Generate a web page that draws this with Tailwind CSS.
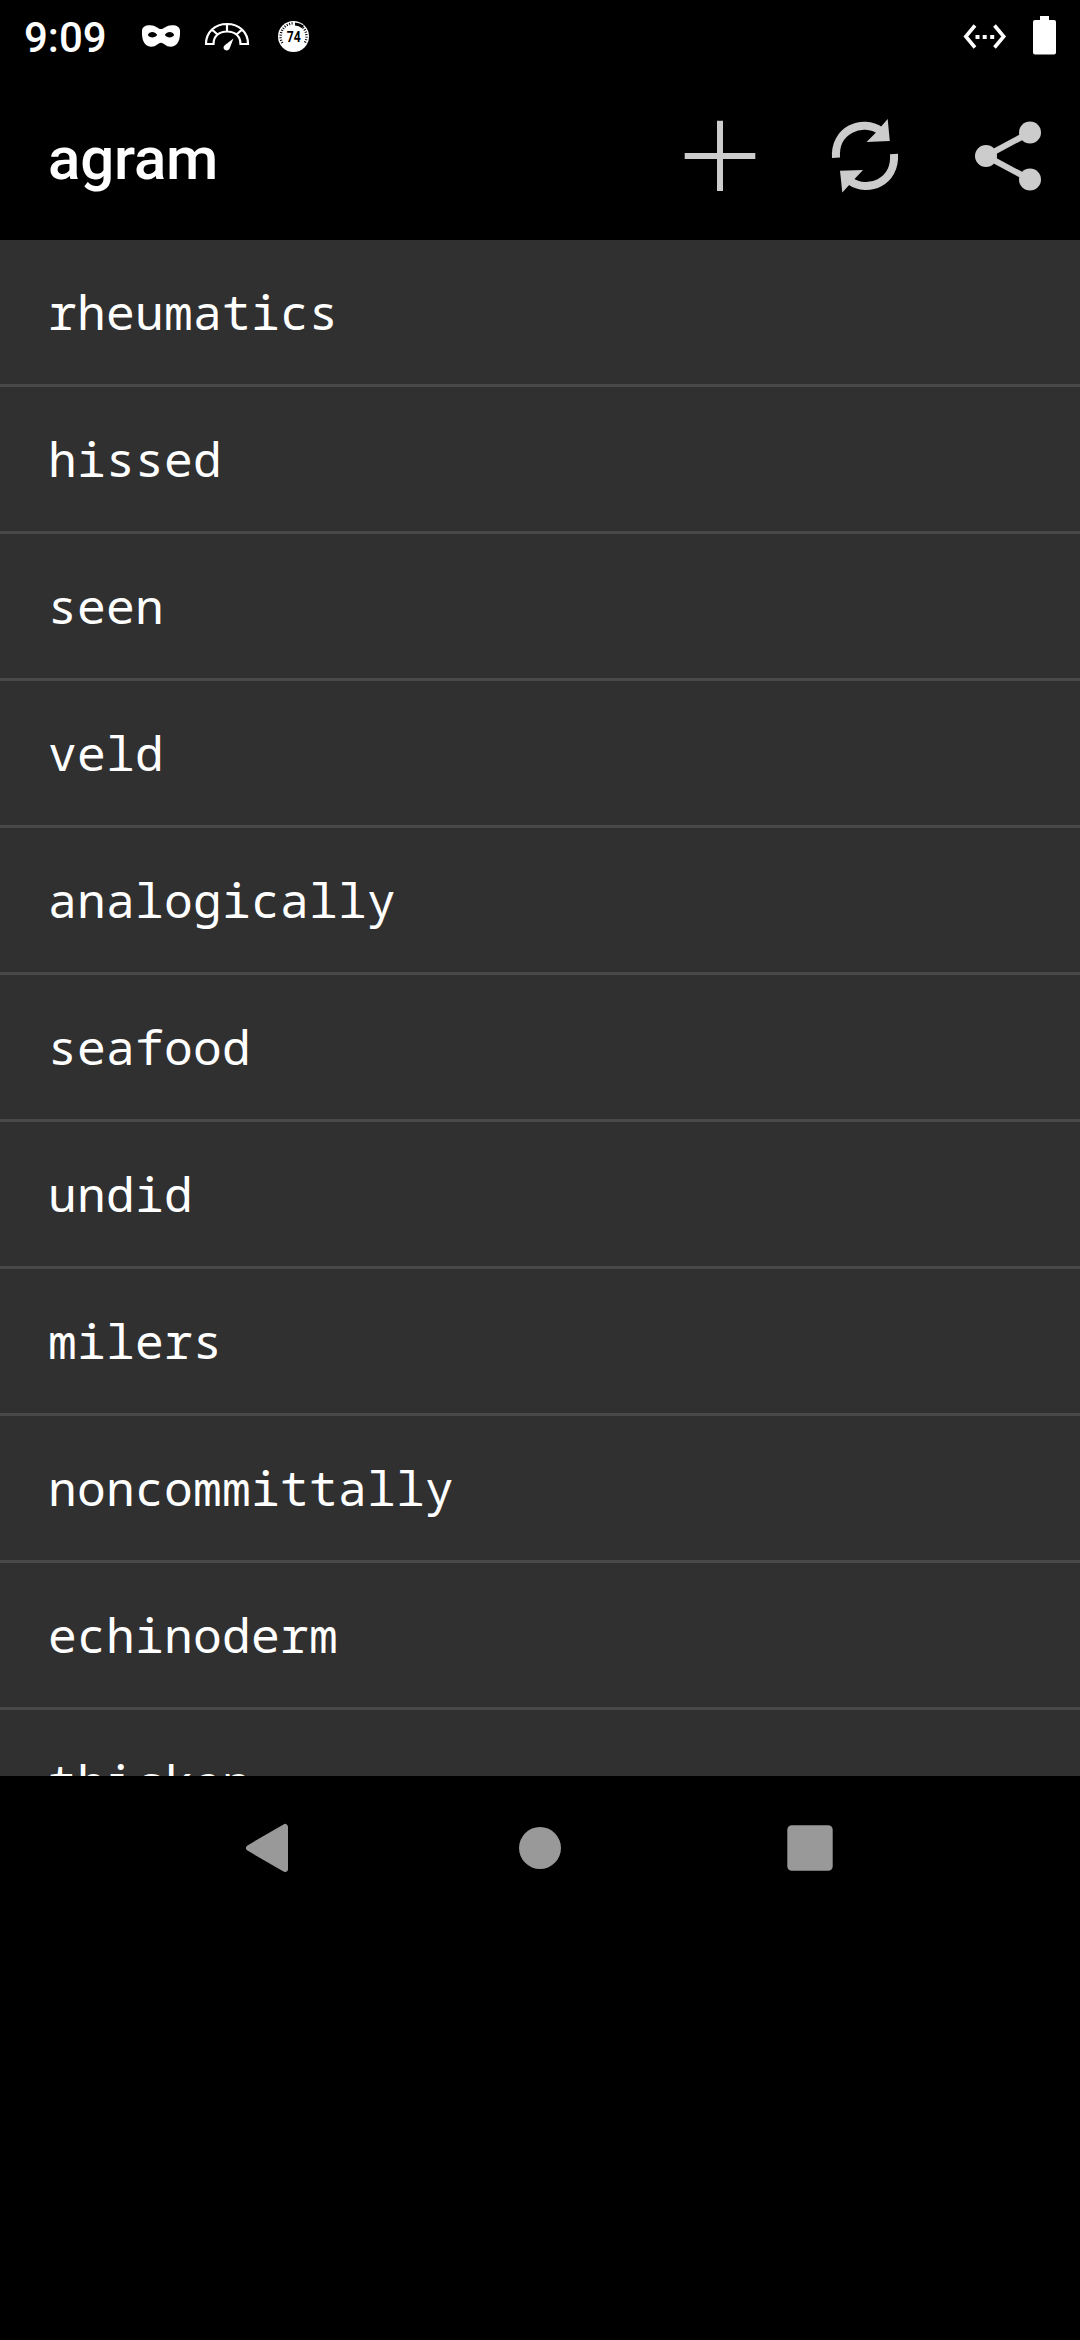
<!DOCTYPE html>
<html lang="en">
<head>
<meta charset="utf-8">
<title>agram</title>
<script src="https://cdn.jsdelivr.net/npm/@tailwindcss/browser@4"></script>
</head>
<body class="bg-black text-white w-[1080px] h-[2340px] overflow-hidden font-['Roboto',sans-serif]">
  <!-- Status bar -->
  <div class="h-[72px] flex items-center justify-between pl-6 pr-[22px]">
    <div class="flex items-center h-[72px]">
      <span class="w-[116px] text-[42px] leading-[72px] font-medium pt-1">9:09</span>
      <svg class="w-[44px] h-[72px]" viewBox="140 0 44 72" fill="none">
        <path fill="#fff" fill-rule="evenodd" d="M142 31C142 27 145 25.200 150 25.200C156 25.200 158 29 161 29C164 29 166 25.200 172 25.200C177 25.200 180 27 180 31C180.500 39 178 46.700 171 46.700C165.500 46.700 164 42.700 161 42.700C158 42.700 156.500 46.700 151 46.700C144 46.700 141.500 39 142 31ZM147.800 35C149.300 31 155 31 157.200 35C155 38.300 149.500 38.300 147.800 35ZM164.800 35C167 31 172.700 31 174.200 35C172.500 38.300 167 38.300 164.800 35Z"/>
      </svg>
      <svg class="w-[84px] h-[72px]" viewBox="184 0 84 72" fill="none">
        <path stroke="#fff" stroke-width="2.200" d="M206 44C206 32 215 24 227 24C239 24 248 32 248 44H240.500C240.500 36 235 31.500 227 31.500C219 31.500 213.500 36 213.500 44ZM227 24V31.500M212.500 30L218 35M241.500 30L236 35"/>
        <path fill="#fff" d="M233.500 38.500L230 47.500C229.500 50 227 51 225 50C223 49 223 46.500 225 45Z"/>
      </svg>
      <svg class="w-[52px] h-[72px]" viewBox="268 0 52 72">
        <circle cx="293.500" cy="36.500" r="15.500" fill="#fff"/>
        <path d="M282.300 43A13.200 13.200 0 0 1 294 23.300" fill="none" stroke="#000" stroke-width="2.400" stroke-dasharray="1 1.500"/>
        <path d="M303 27.500A13.200 13.200 0 0 1 304.700 43" fill="none" stroke="#000" stroke-width="2.400" stroke-dasharray="1 1.500"/>
        <path d="M295 24A13 13 0 0 1 303 27" fill="none" stroke="#000" stroke-width="3"/>
        <text x="293.700" y="41.700" text-anchor="middle" textLength="14" lengthAdjust="spacingAndGlyphs" font-family="Roboto" font-weight="700" font-size="14" fill="#000">74</text>
      </svg>
    </div>
    <svg class="w-[98px] h-[72px]" viewBox="960 0 98 72" fill="none">
      <path stroke="#fff" stroke-width="3.600" d="M975 25.500L965.800 36.500L975 47.500M994.500 25.500L1003.700 36.500L994.500 47.500"/>
      <path fill="#fff" d="M975.500 35h4v4h-4zM982.700 35h4v4h-4zM990.200 35h4v4h-4zM1040 16h9v4h5q2 0 2 2v30.500q0 2-2 2h-19q-2 0-2-2V22q0-2 2-2h5z"/>
    </svg>
  </div>

  <!-- App bar -->
  <header class="h-[168px] flex items-center justify-between pl-12">
    <h1 class="text-[60px] leading-[72px] tracking-[-0.2px] font-medium pt-1.5">agram</h1>
    <div class="flex text-[#cccccc]">
      <svg class="w-[144px] h-[168px]" viewBox="648 72 144 168"><path fill="currentColor" d="M717 120.700h6V153h32.300v6H723v32h-6v-32h-32.300v-6H717z"/></svg>
      <svg class="w-[144px] h-[168px]" viewBox="792 72 144 168">
        <path fill="none" stroke="currentColor" stroke-width="8" d="M836 157.800C834 130 862 118 881 131M894 154C896 182 868 193.500 850 181"/>
        <path fill="currentColor" d="M887.700 119L889.800 141L866.500 142L875 133.500ZM842.300 192.500L840 170.700L863 170L855 178.500Z"/>
      </svg>
      <svg class="w-[144px] h-[168px]" viewBox="936 72 144 168">
        <path fill="none" stroke="currentColor" stroke-width="6" d="M1030 132.500L986 156L1030 179.500"/>
        <g fill="currentColor"><circle cx="986" cy="156" r="11"/><circle cx="1030" cy="132.500" r="11"/><circle cx="1030" cy="179.500" r="11"/></g>
      </svg>
    </div>
  </header>

  <!-- Word list -->
  <ul class="h-[1536px] overflow-hidden bg-[#303030] divide-y-[3px] divide-[#494949] font-['Droid_Sans_Mono','Noto_Sans_Mono','DejaVu_Sans_Mono',monospace] text-[48px] tracking-[0.2px] leading-[144px] [&>li]:px-12 [&>li]:h-[147px]">
    <li>rheumatics</li>
    <li>hissed</li>
    <li>seen</li>
    <li>veld</li>
    <li>analogically</li>
    <li>seafood</li>
    <li>undid</li>
    <li>milers</li>
    <li>noncommittally</li>
    <li>echinoderm</li>
    <li>thicken</li>
  </ul>

  <!-- Navigation bar -->
  <nav class="h-[144px] flex justify-center text-[#999999]">
    <svg class="w-[270px] h-[144px]" viewBox="135 1776 270 144"><path fill="currentColor" stroke="currentColor" stroke-width="6" stroke-linejoin="round" d="M285 1827V1869L249 1848Z"/></svg>
    <svg class="w-[270px] h-[144px]" viewBox="405 1776 270 144"><circle cx="540" cy="1848" r="21" fill="currentColor"/></svg>
    <svg class="w-[270px] h-[144px]" viewBox="675 1776 270 144"><rect x="787.300" y="1825.300" width="45.400" height="45.400" rx="4.500" fill="currentColor"/></svg>
  </nav>
</body>
</html>
